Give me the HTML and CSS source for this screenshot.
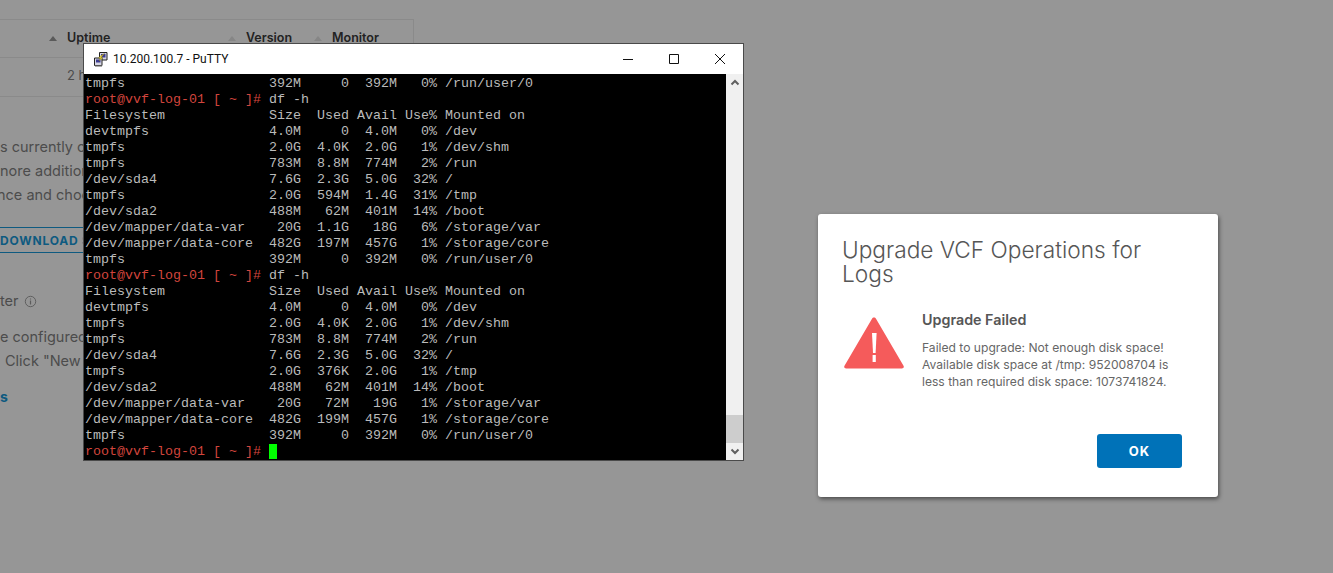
FILE: index.html
```html
<!DOCTYPE html>
<html lang="en">
<head>
<meta charset="utf-8">
<title>Upgrade VCF Operations for Logs</title>
<link rel="stylesheet" href="styles.css">
</head>
<body>
<main class="page">
  <section class="table">
    <div class="table-head">
      <span class="cell cell-uptime"><i class="sort sort-on"></i>Uptime</span>
      <span class="cell cell-version"><i class="sort"></i>Version</span>
      <span class="cell cell-monitor"><i class="sort"></i>Monitor</span>
    </div>
    <div class="table-row"><span class="cell cell-uptime">2 h</span></div>
  </section>
  <section class="upgrade-copy">
    <p class="copy-line">s currently o</p>
    <p class="copy-line">nore addition</p>
    <p class="copy-line copy-choose">nce and choo</p>
  </section>
  <div class="download">DOWNLOAD S</div>
  <h2 class="forwarder">ter <svg class="info" viewBox="0 0 14 14" width="13" height="13"><circle cx="7" cy="7" r="5.6" fill="none" stroke="#5c5c5c" stroke-width="1"/><path d="M7 6v4.200M7 3.800v1" stroke="#5c5c5c" stroke-width="1.300" fill="none"/></svg></h2>
  <section class="filter-copy">
    <p class="copy-line">e configured</p>
    <p class="copy-line copy-click">Click "New V</p>
  </section>
  <div class="link-s">s</div>
</main>

<div class="putty">
  <header class="putty-title">
    <svg class="putty-icon" viewBox="0 0 16 16" width="16" height="16">
      <path d="M6.500 1.500h7.500v7.500h-7.500z" fill="#d6d6e4" stroke="#222" stroke-width="1"/>
      <path d="M8 3h4.500v3.500h-4.500z" fill="#3c3c90"/>
      <path d="M1.500 7h7.500v7.500h-7.500z" fill="#d6d6e4" stroke="#222" stroke-width="1"/>
      <path d="M3 8.500h4.500v3h-4.500z" fill="#3c3c90"/>
      <path d="M2 14.500h7v1.200h-7z" fill="#888"/>
      <path d="M11.500 2.500 8 6.500l2 .2-4 3.300 1.500-2.700-2-.2 2.500-2.500z" fill="#f4e23c" stroke="#7a6a10" stroke-width=".4"/>
    </svg>
    <span class="putty-name">10.200.100.7 - PuTTY</span>
    <div class="win-buttons">
      <span class="win-btn"><svg viewBox="0 0 12 12" width="12" height="12"><path d="M1 6.500h10" stroke="#111" fill="none"/></svg></span>
      <span class="win-btn"><svg viewBox="0 0 12 12" width="12" height="12"><path d="M1.500 1.500h9v9h-9z" stroke="#111" fill="none"/></svg></span>
      <span class="win-btn"><svg viewBox="0 0 12 12" width="12" height="12"><path d="M1 1l10 10M11 1 1 11" stroke="#111" fill="none"/></svg></span>
    </div>
  </header>
  <div class="putty-body">
<pre class="terminal">tmpfs                  392M     0  392M   0% /run/user/0
<span class="prompt">root@vvf-log-01 [ ~ ]#</span> df -h
Filesystem             Size  Used Avail Use% Mounted on
devtmpfs               4.0M     0  4.0M   0% /dev
tmpfs                  2.0G  4.0K  2.0G   1% /dev/shm
tmpfs                  783M  8.8M  774M   2% /run
/dev/sda4              7.6G  2.3G  5.0G  32% /
tmpfs                  2.0G  594M  1.4G  31% /tmp
/dev/sda2              488M   62M  401M  14% /boot
/dev/mapper/data-var    20G  1.1G   18G   6% /storage/var
/dev/mapper/data-core  482G  197M  457G   1% /storage/core
tmpfs                  392M     0  392M   0% /run/user/0
<span class="prompt">root@vvf-log-01 [ ~ ]#</span> df -h
Filesystem             Size  Used Avail Use% Mounted on
devtmpfs               4.0M     0  4.0M   0% /dev
tmpfs                  2.0G  4.0K  2.0G   1% /dev/shm
tmpfs                  783M  8.8M  774M   2% /run
/dev/sda4              7.6G  2.3G  5.0G  32% /
tmpfs                  2.0G  376K  2.0G   1% /tmp
/dev/sda2              488M   62M  401M  14% /boot
/dev/mapper/data-var    20G   72M   19G   1% /storage/var
/dev/mapper/data-core  482G  199M  457G   1% /storage/core
tmpfs                  392M     0  392M   0% /run/user/0
<span class="prompt">root@vvf-log-01 [ ~ ]#</span> <span class="cursor"> </span></pre>
    <div class="scrollbar">
      <svg class="scroll-arrow" viewBox="0 0 16 17" width="16" height="17"><path d="M4.500 10.500 8 7l3.500 3.500" stroke="#606060" stroke-width="2" fill="none"/></svg>
      <div class="scroll-track"><div class="scroll-thumb"></div></div>
      <svg class="scroll-arrow" viewBox="0 0 16 17" width="16" height="17"><path d="M4.500 6.500 8 10l3.500-3.500" stroke="#606060" stroke-width="2" fill="none"/></svg>
    </div>
  </div>
</div>

<div class="modal">
  <h1 class="modal-title">Upgrade VCF Operations for Logs</h1>
  <div class="modal-main">
    <svg class="alert-icon" viewBox="0 0 60 52" width="60" height="52">
      <path d="M30 .5c.9 0 1.600.5 2 1.200l27.500 47c.8 1.400-.1 2.800-1.700 2.800H2.200c-1.600 0-2.500-1.400-1.700-2.800l27.500-47c.4-.7 1.100-1.200 2-1.200z" fill="#f55b5b"/>
      <path d="M28 16h4.600l-1 20h-2.600z" fill="#fff"/>
      <path d="M28.600 38h3.200v7h-3.200z" fill="#fff"/>
    </svg>
    <div class="modal-text">
      <h2 class="modal-sub">Upgrade Failed</h2>
      <p class="modal-msg">Failed to upgrade: Not enough disk space!<br>Available disk space at /tmp: 952008704 is<br>less than required disk space: 1073741824.</p>
    </div>
  </div>
  <div class="modal-actions"><button class="ok-btn" type="button">OK</button></div>
</div>
</body>
</html>
```
FILE: styles.css
```css
html, body {
  margin: 0;
  height: 573px;
  overflow: hidden;
}
body {
  background: #969696;
  font-family: "Inter", "Lato", sans-serif;
  color: #474747;
  position: relative;
  width: 1333px;
}
h1, h2, p { margin: 0; font-weight: normal; }

.page {
  display: flex;
  flex-direction: column;
  padding-top: 19px;
  width: 414px;
}
.table {
  border: 1px solid #8a8a8a;
  border-left: 0;
  height: 78px;
  box-sizing: border-box;
}
.table-head {
  height: 38px;
  box-sizing: border-box;
  border-bottom: 1px solid #8a8a8a;
  display: flex;
  align-items: flex-end;
  padding-bottom: 11px;
  font-weight: 600;
  font-size: 12.5px;
  color: #222;
}
.table-row {
  display: flex;
  padding-top: 9px;
  font-size: 13px;
  color: #4c4c4c;
}
.cell { display: inline-flex; align-items: center; position: relative; line-height: 16px; }
.cell-uptime { margin-left: 67px; width: 179px; }
.cell-version { width: 86px; }
.sort {
  position: absolute;
  left: -18px;
  top: 6px;
  width: 0;
  height: 0;
  border: 4px solid transparent;
  border-top: 0;
  border-bottom: 5px solid #5a5a5a;
}
.cell-version .sort, .cell-monitor .sort { border-bottom-color: #868686; }
.upgrade-copy {
  margin-top: 38px;
  display: flex;
  flex-direction: column;
}
.copy-line {
  font-size: 14.5px;
  line-height: 24px;
  white-space: nowrap;
  color: #4c4c4c;
}
.copy-choose { margin-left: -3px; }
.download {
  width: 100px;
  height: 26px;
  box-sizing: border-box;
  margin-top: 20px;
  border-top: 1px solid #0e5a80;
  border-bottom: 1px solid #0e5a80;
  font-size: 12px;
  font-weight: 700;
  letter-spacing: .8px;
  line-height: 26px;
  color: #0e5a80;
  white-space: nowrap;
}
.forwarder {
  margin-top: 37px;
  font-size: 14.5px;
  line-height: 22px;
  color: #4c4c4c;
  display: flex;
  align-items: center;
  gap: 5px;
}
.filter-copy {
  margin-top: 13px;
  display: flex;
  flex-direction: column;
}
.copy-click { margin-left: 5px; }
.link-s {
  margin-top: 12px;
  font-size: 14px;
  font-weight: 700;
  color: #0e5a80;
  line-height: 24px;
}

.putty {
  position: absolute;
  left: 83px;
  top: 43px;
  width: 661px;
  height: 418px;
  box-sizing: border-box;
  border: 1px solid #4a4a4a;
  background: #fff;
  display: flex;
  flex-direction: column;
}
.putty-title {
  height: 30px;
  display: flex;
  align-items: center;
  padding-left: 9px;
  color: #111;
  font-family: "Roboto", "Liberation Sans", sans-serif;
  font-size: 12px;
}
.putty-icon { margin-right: 4px; }
.putty-name { flex: 1; }
.win-buttons { display: flex; }
.win-btn {
  width: 46px;
  height: 30px;
  display: flex;
  align-items: center;
  justify-content: center;
}
.putty-body { flex: 1; display: flex; min-height: 0; }
.terminal {
  margin: 0;
  flex: 1;
  padding: 2px 0 0 1px;
  background: #000;
  color: #bbb;
  font-family: "Liberation Mono", "Courier New", monospace;
  font-size: 13.33px;
  line-height: 16px;
  overflow: hidden;
  white-space: pre;
}
.prompt { color: #d2453d; }
.cursor { background: #00ff00; }
.scrollbar {
  width: 17px;
  background: #f0f0f0;
  display: flex;
  flex-direction: column;
  align-items: center;
}
.scroll-arrow { flex: none; }
.scroll-track { flex: 1; width: 100%; display: flex; flex-direction: column; justify-content: flex-end; }
.scroll-thumb { height: 28px; background: #cdcdcd; }

.modal {
  position: absolute;
  left: 818px;
  top: 214px;
  width: 400px;
  height: 283px;
  box-sizing: border-box;
  padding: 24px 36px 29px 24px;
  background: #fff;
  border-radius: 3px;
  box-shadow: 1px 2px 4px rgba(0,0,0,.5);
  display: flex;
  flex-direction: column;
}
.modal-title {
  font-weight: 300;
  font-size: 22.7px;
  line-height: 24px;
  color: #565656;
}
.modal-main {
  display: flex;
  margin-top: 23px;
  margin-left: 2px;
  gap: 18px;
}
.alert-icon { flex: none; margin-top: 8px; }
.modal-sub {
  font-size: 14.3px;
  font-weight: 600;
  line-height: 20px;
  margin-top: 1px;
  color: #565656;
}
.modal-msg {
  margin-top: 9px;
  font-size: 12.1px;
  line-height: 17px;
  color: #666;
}
.modal-actions { margin-top: auto; display: flex; justify-content: flex-end; }
.ok-btn {
  width: 85px;
  height: 34px;
  border: 0;
  border-radius: 3px;
  background: #0072b8;
  color: #fff;
  font-family: "Inter", sans-serif;
  font-size: 13px;
  font-weight: 700;
  letter-spacing: 1px;
}
```
